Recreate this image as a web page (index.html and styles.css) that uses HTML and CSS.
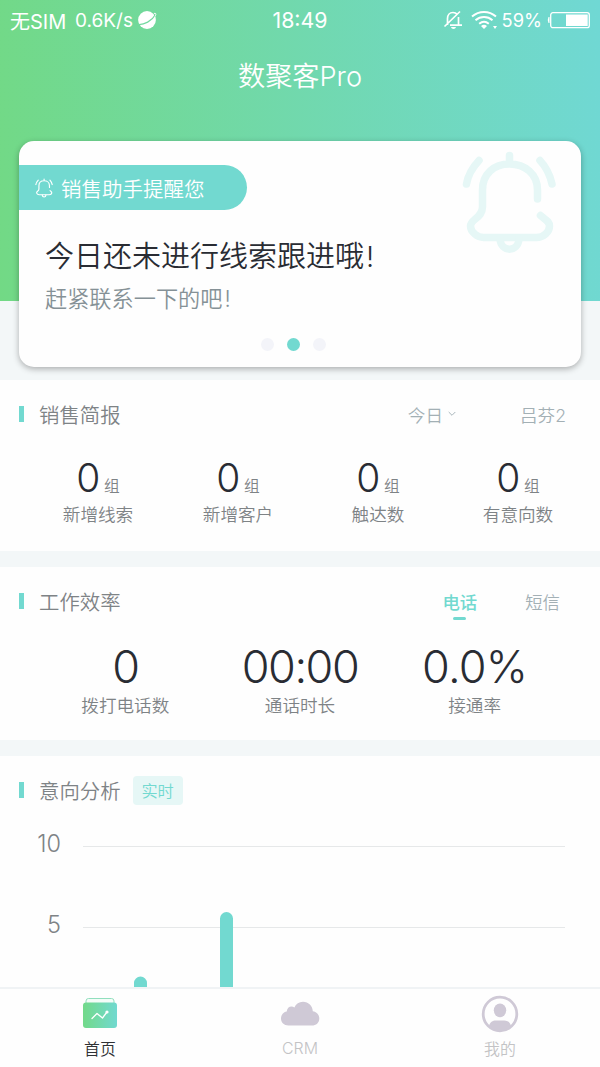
FILE: index.html
```html
<!DOCTYPE html>
<html lang="zh-CN">
<head>
<meta charset="utf-8">
<title>数聚客Pro</title>
<link rel="stylesheet" href="styles.css">
</head>
<body>
<div class="app">
  <header class="header">
    <div class="status">
      <div class="status-left">
        <span class="carrier">无SIM</span><span class="speed">0.6K/s</span>
        <svg class="planet" width="20" height="20" viewBox="0 0 20 20"><circle cx="10" cy="10" r="8.9" fill="#fff"/><path d="M1 14.500C7 15 15 11 18.500 4.500" fill="none" stroke="#73d9a0" stroke-width="1.200"/><path d="M17 3.500c2-.8 2.400.6 1 3" fill="none" stroke="#fff" stroke-width="1"/></svg>
      </div>
      <div class="clock">18:49</div>
      <div class="status-right">
        <svg class="mute" width="20" height="20" viewBox="0 0 20 20" fill="none" stroke="#fff" stroke-width="1.700"><path d="M4.500 15V8.500c0-3.500 2-6 5.500-6 1.800 0 3.200.7 4.200 1.800M15.500 7v8M7 15.200h12M1.500 16.500L17 1.500"/><path d="M8 17h5c-.5 2.500-4.500 2.500-5 0z" fill="#fff" stroke="none"/></svg>
        <svg class="wifi" width="26" height="20" viewBox="0 0 26 20" fill="none" stroke="#fff" stroke-width="2"><path d="M1 6.500C8 .5 18 .5 25 6.500M4.500 10.300c5-4.300 12-4.300 17 0M8.200 13.800c3-2.500 6.600-2.500 9.600 0"/><path d="M10 16c2-1.600 4-1.600 6 0l-3 3z" fill="#fff" stroke="none"/><path d="M22 16h4l-2 3z" fill="#fff" stroke="none"/></svg>
        <span class="percent">59%</span>
        <svg class="battery" width="43" height="18" viewBox="0 0 43 18"><path d="M2.500 6H1.500Q0 9 1.500 12h1z" fill="#fff"/><rect x="3.700" y="1.700" width="38.600" height="15" rx="2.200" fill="none" stroke="#fff" stroke-width="1.300"/><rect x="19" y="3.500" width="21.700" height="11.500" fill="#fff"/></svg>
      </div>
    </div>
    <h1 class="title">数聚客<span>Pro</span></h1>
  </header>

  <section class="card">
    <svg class="bell-large" width="94" height="104" viewBox="0 0 94 104" fill="none" stroke="#e6f7f6" stroke-width="7.500" stroke-linecap="round" stroke-linejoin="round"><path d="M47.500 5.500v8M75.500 49V40C75.500 24 63 14 47.500 14S20.500 24 20.500 40v17c0 11-12 12-12 19 0 6 7 11.500 13 11.500h53c7 0 13-5.500 13-11.500 0-5-4-6-9-10.500"/><path d="M38 89c1 13.500 18 13.500 19 0M17 10.500C10 18 6 25 4.500 34M78 10.500c7 7.500 10 14.500 12 23.500"/></svg>
    <div class="reminder">
      <svg width="18" height="20" viewBox="0 0 94 104" fill="none" stroke="#fff" stroke-width="6" stroke-linecap="round"><path d="M47.500 5.500v8M75.500 49V40C75.500 24 63 14 47.500 14S20.500 24 20.500 40v17c0 11-12 12-12 19 0 6 7 11.500 13 11.500h53c7 0 13-5.500 13-11.500 0-5-4-6-9-10.500"/><path d="M38 89c1 13.500 18 13.500 19 0M17 10.500C10 18 6 25 4.500 34M78 10.500c7 7.500 10 14.500 12 23.500"/></svg>
      <span>销售助手提醒您</span>
    </div>
    <h2 class="headline">今日还未进行线索跟进哦<span>!</span></h2>
    <p class="subline">赶紧联系一下的吧<span>!</span></p>
    <div class="dots"><i></i><i class="on"></i><i></i></div>
  </section>

  <section class="panel report">
    <div class="panel-head">
      <h3>销售简报</h3>
      <div class="filters"><span>今日</span><svg width="8" height="6" viewBox="0 0 8 6"><path d="M.7 1L4 4.300 7.300 1" fill="none" stroke="#a9b6bb"/></svg><span class="user">吕芬<span class="latin">2</span></span></div>
    </div>
    <div class="stats four">
      <div class="stat"><div class="value"><b>0</b><small>组</small></div><p>新增线索</p></div>
      <div class="stat"><div class="value"><b>0</b><small>组</small></div><p>新增客户</p></div>
      <div class="stat"><div class="value"><b>0</b><small>组</small></div><p>触达数</p></div>
      <div class="stat"><div class="value"><b>0</b><small>组</small></div><p>有意向数</p></div>
    </div>
  </section>

  <section class="panel work">
    <div class="panel-head">
      <h3>工作效率</h3>
      <div class="tabs"><span class="active">电话</span><span>短信</span></div>
    </div>
    <div class="stats three">
      <div class="stat"><div class="value"><b>0</b></div><p>拨打电话数</p></div>
      <div class="stat"><div class="value"><b>00:00</b></div><p>通话时长</p></div>
      <div class="stat"><div class="value"><b class="rate">0.0%</b></div><p>接通率</p></div>
    </div>
  </section>

  <section class="panel analysis">
    <div class="panel-head">
      <h3>意向分析</h3><span class="tag">实时</span>
    </div>
    <div class="chart">
      <div class="axis"><span>10</span><span>5</span></div>
      <svg class="plot" width="482" height="172" viewBox="0 0 482 172"><path d="M0 31.500h482M0 112.500h482" stroke="#e6e8e9"/><path d="M51 173v-5a6.500 6.500 0 0 1 13 0v5zM137 173V103.500a6.500 6.500 0 0 1 13 0V173z" fill="#72d9d0"/></svg>
    </div>
  </section>

  <nav class="nav">
    <a class="current">
      <svg width="40" height="40" viewBox="0 0 40 40"><defs><linearGradient id="g"><stop stop-color="#72d989"/><stop offset="1" stop-color="#71d9d0"/></linearGradient></defs><path d="M6 9V7q0-2.500 2.500-2.500h23Q34 4.500 34 7v2" fill="#f4fcf8" stroke="#91dfbe"/><rect x="3" y="8.500" width="34" height="25.500" rx="3" fill="url(#g)"/><path d="M12 24.500l5-5 5.500 4.500 4.500-6" fill="none" stroke="#fff" stroke-width="1.300" stroke-linecap="round" stroke-linejoin="round"/><circle cx="27" cy="18" r="1.600" fill="#fff"/></svg>
      <span>首页</span>
    </a>
    <a>
      <svg width="40" height="40" viewBox="0 0 40 40"><path d="M8.500 31.500C4 31.500 1 28.500 1 24.500c0-3.600 2.300-6.400 5.700-7.100C7 14.500 9 12.500 11.500 12.500c1.100 0 2 .3 2.900.9C16 9.800 19 7.700 23 7.700c5.500 0 9.600 4.300 9.800 9.600 3.700.5 6.500 3.300 6.500 7.100 0 4.200-3.200 7.100-7.500 7.100z" fill="#cfc9d6"/></svg>
      <span class="latin">CRM</span>
    </a>
    <a>
      <svg width="40" height="40" viewBox="0 0 40 40"><circle cx="20" cy="20" r="16.800" fill="none" stroke="#cfc9d6" stroke-width="2.800"/><ellipse cx="20" cy="16.300" rx="6.200" ry="6.900" fill="#cfc9d6"/><path d="M9 32c1-4 3.500-5.500 7-5.500h8c3.500 0 6 1.500 7 5.500-5 6-17 6-22 0z" fill="#cfc9d6"/></svg>
      <span>我的</span>
    </a>
  </nav>
</div>
</body>
</html>
```

FILE: styles.css
```css
* { box-sizing: border-box; margin: 0; padding: 0; }
body {
  background: #f3f7f8;
  font-family: "Noto Sans CJK SC", sans-serif;
  font-weight: 350;
  color: #7e8386;
}
svg { display: block; flex: none; }
i { font-style: normal; }
.latin, .title span, .headline span, .subline span { font-family: Inter, sans-serif; font-weight: 300; line-height: 1; }
.app { width: 600px; height: 1067px; overflow: hidden; display: flex; flex-direction: column; }

.header { height: 301px; flex: none; background: linear-gradient(85deg, #72d985, #70d8d4); color: #fff; }
.status { height: 40px; display: grid; grid-template-columns: 1fr auto 1fr; align-items: center; padding: 0 10px; font-family: Inter, "Noto Sans CJK SC", sans-serif; font-size: 18.300px; font-weight: 400; white-space: nowrap; }
.status-left, .status-right { display: flex; align-items: center; }
.status-right { justify-content: flex-end; }
.carrier { font-size: 20px; width: 65px; }
.speed { width: 62px; font-size: 19px; }
.clock { font-size: 21.300px; }
.wifi { margin-left: 8px; }
.percent { margin-left: 5px; }
.battery { margin-left: 5px; }
.title { padding-top: 14px; line-height: 40px; font-size: 27.200px; font-weight: 350; text-align: center; }

.card { position: relative; flex: none; width: 562px; height: 226px; margin: -160px 0 0 19px; padding-top: 24px; border-radius: 15px; background: #fefefe; box-shadow: 0 2px 6px rgba(0, 0, 0, .3); }
.bell-large { position: absolute; right: 25px; top: 9px; }
.reminder { display: flex; align-items: center; gap: 8px; width: 228px; height: 45px; padding-left: 16px; border-radius: 0 23px 23px 0; background: #72d9d0; color: #fff; font-size: 20.500px; }
.headline { margin: 23px 0 0 26px; line-height: 42px; font-size: 29px; font-weight: 350; color: #292c33; }
.headline span, .subline span { margin-left: 2px; }
.subline { margin: 1px 0 0 26px; line-height: 42px; font-size: 22.200px; color: #859196; }
.dots { display: flex; justify-content: center; gap: 13px; margin: 20px 0 0 -13px; }
.dots i { width: 13px; height: 13px; border-radius: 50%; background: #f3f4f9; }
.dots .on { background: #72d9d0; }

.panel { flex: none; background: #fefefe; }
.report { height: 171px; margin-top: 13px; }
.work { height: 173px; margin-top: 16px; }
.analysis { height: 231px; margin-top: 16px; }
.panel-head { display: flex; align-items: center; height: 68px; padding: 0 34px 0 19px; }
.panel-head h3 { display: flex; align-items: center; gap: 15px; font-size: 20.400px; font-weight: 350; line-height: 30px; }
.panel-head h3::before { content: ""; width: 5px; height: 16px; background: #72d9d0; }
.filters, .tabs { display: flex; align-items: center; margin-left: auto; font-size: 17.600px; color: #a3b0b5; }
.filters svg { margin-left: 5px; }
.user { margin-left: 64px; }
.tabs { gap: 48px; margin-right: 6px; font-size: 17.400px; }
.tabs .active { position: relative; color: #72d9d0; font-weight: 500; }
.active::after { content: ""; position: absolute; left: 11px; bottom: -6px; width: 13px; height: 3px; border-radius: 2px; background: #72d9d0; }

.stats { display: grid; text-align: center; }
.four { grid-template-columns: repeat(4, 1fr); padding: 0 12px 0 28px; }
.three { grid-template-columns: repeat(3, 1fr); padding: 0 38px; }
.value { display: flex; justify-content: center; align-items: baseline; }
.value b { font-family: Inter, sans-serif; font-weight: 300; color: #292c33; }
.value small { margin: 0 0 0 4px; font-size: 15.700px; line-height: 24px; }
.four .value { margin-top: 4px; height: 50px; }
.four .value b { font-size: 39px; line-height: 52px; letter-spacing: -.5px; }
.three .value { margin-top: 4px; height: 54px; }
.three .value b { font-size: 45px; line-height: 55px; letter-spacing: -1.500px; }
.three .value .rate { letter-spacing: -.7px; }
.stat p { font-size: 17.600px; line-height: 24px; }

.tag { margin-left: 12px; width: 50px; height: 29px; line-height: 29px; text-align: center; font-size: 16.200px; border-radius: 4px; background: #e6f7f6; color: #72d9d0; }
.chart { display: flex; height: 172px; margin-top: -9px; }
.axis { width: 61px; display: flex; flex-direction: column; gap: 51px; padding-top: 14px; text-align: right; font-family: Inter, sans-serif; font-weight: 300; font-size: 23.500px; line-height: 30px; }
.plot { margin-left: 22px; }

.nav { flex: none; display: grid; grid-template-columns: repeat(3, 200px); height: 80px; border-top: 2px solid #f0f3f5; background: #fefefe; }
.nav a { display: flex; flex-direction: column; align-items: center; padding-top: 5px; font-size: 15.900px; line-height: 24px; color: #c3c3c5; }
.nav a span { margin-top: 3px; line-height: 24px; }
.nav .current { color: #2f3134; }
```
